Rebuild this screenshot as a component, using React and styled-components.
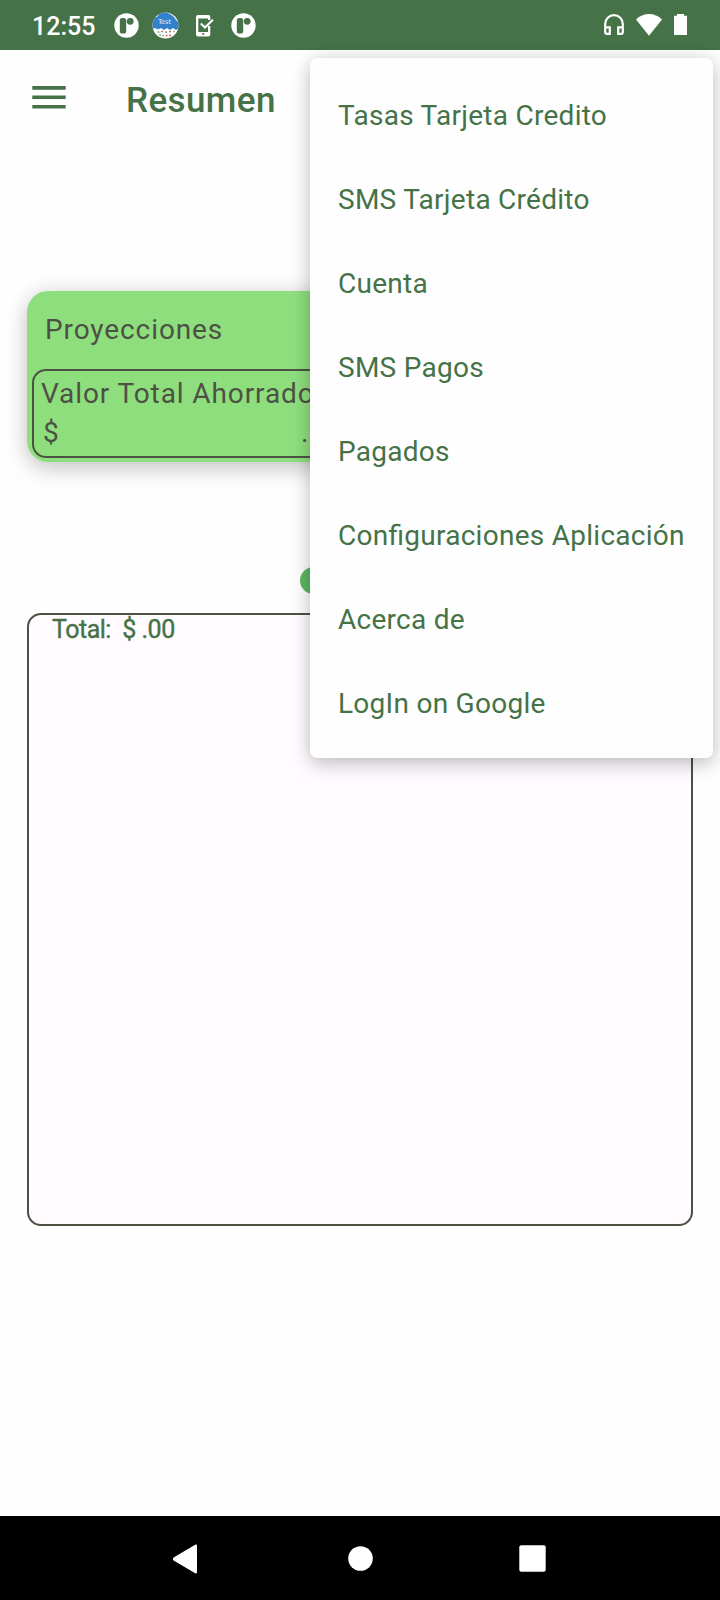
import React from "react";
import styled, { createGlobalStyle } from "styled-components";

const GREEN = "#457247";
const OLIVE = "#4c5144";

const GlobalStyle = createGlobalStyle`
  * { box-sizing: border-box; }
  body { margin: 0; background: #fff; }
`;

const Screen = styled.div`
  position: relative;
  width: 720px;
  height: 1600px;
  display: flex;
  flex-direction: column;
  overflow: hidden;
  background: #fefefe;
  color: ${GREEN};
  font-family: Roboto, "Liberation Sans", sans-serif;
`;

const StatusBar = styled.header`
  height: 50px;
  flex: none;
  display: flex;
  align-items: center;
  justify-content: space-between;
  padding: 1px 33px 0 32px;
  background: ${GREEN};
  color: #fff;
`;

const StatusGroup = styled.div`
  display: flex;
  align-items: center;
  gap: ${(p) => p.$gap}px;
`;

const Clock = styled.span`
  width: 65px;
  font-size: 25px;
  font-weight: 500;
  line-height: 48px;
  padding-top: 2px;
  white-space: nowrap;
`;

const Glyph = styled.svg`
  display: block;
  flex: none;
`;

const AppBar = styled.div`
  height: 98px;
  flex: none;
  display: flex;
  align-items: center;
  gap: 60px;
  padding: 0 0 2px 32px;
`;

const Title = styled.h1`
  margin: 6px 0 0;
  font-size: 35px;
  font-weight: 500;
  line-height: 42px;
  letter-spacing: 0.4px;
`;

const Content = styled.main`
  flex: 1;
  display: flex;
  flex-direction: column;
  padding: 143px 27px 0;
`;

const Card = styled.section`
  height: 171px;
  padding: 20px 5px 4px;
  border-radius: 21px;
  background: #8fde7e;
  color: ${OLIVE};
  box-shadow: 0 8px 22px rgba(0, 0, 0, 0.17), 0 0 22px rgba(0, 0, 0, 0.09);
  display: flex;
  flex-direction: column;
  justify-content: space-between;
`;

const CardTitle = styled.div`
  padding-left: 13px;
  font-size: 28px;
  line-height: 38px;
  letter-spacing: 0.9px;
`;

const SavingsBox = styled.div`
  height: 89px;
  padding: 3px 8px 0 7px;
  border: 2px solid ${OLIVE};
  border-radius: 14px;
  font-size: 28px;
  line-height: 39px;
  letter-spacing: 0.9px;
  white-space: nowrap;
`;

const Amount = styled.div`
  display: flex;
  padding-left: 2px;
`;

const Currency = styled.span`
  width: 258px;
`;

const Pager = styled.div`
  height: 27px;
  margin: 105px 0 19px;
  display: flex;
  justify-content: center;
  gap: 66px;
`;

const PageDot = styled.span`
  width: 27px;
  height: 27px;
  border-radius: 50%;
  background: #5cb860;
`;

const Summary = styled.section`
  height: 613px;
  padding: 0 23px;
  border: 2px solid ${OLIVE};
  border-radius: 14px;
  background: #fffbff;
`;

const Total = styled.p`
  margin: 0;
  font-size: 25px;
  line-height: 30px;
  letter-spacing: -0.5px;
  white-space: pre;
  -webkit-text-stroke: 0.4px ${GREEN};
`;

const Menu = styled.nav`
  position: absolute;
  left: 310px;
  top: 58px;
  width: 403px;
  height: 700px;
  padding: 16px 0 12px;
  border-radius: 7px;
  background: #fefefe;
  box-shadow: 0 7px 20px rgba(0, 0, 0, 0.2), 0 0 16px rgba(0, 0, 0, 0.09);
`;

const MenuItem = styled.div`
  height: 84px;
  padding-left: 28px;
  font-size: 28px;
  line-height: 84px;
  letter-spacing: 0.27px;
  font-feature-settings: "liga" 1;
  white-space: nowrap;
`;

const NavBar = styled.footer`
  height: 84px;
  flex: none;
  display: flex;
  align-items: center;
  justify-content: space-between;
  padding: 1px 172px 0;
  background: #000;
`;

function RoundLogo() {
  return (
    <Glyph width="25" height="25" viewBox="0 0 25 25">
      <circle cx="12.5" cy="12.5" r="12.2" fill="#fff" />
      <rect x="5.8" y="5" width="6.4" height="15.5" rx="2.6" fill={GREEN} />
      <circle cx="16.2" cy="8.3" r="3.4" fill={GREEN} />
    </Glyph>
  );
}

function TestBadge() {
  const marks = [
    [6.5, 20, "#4c9a5c"], [10, 19.5, "#b83a45"], [14, 20, "#4c9a5c"], [18, 19.5, "#c8323c"], [22, 19.5, "#72b37b"],
    [8, 23, "#4c9a5c"], [11, 23.5, "#5da76b"], [14.5, 23.5, "#b83a45"], [18, 23.3, "#c8323c"],
  ];
  return (
    <Glyph width="27" height="27" viewBox="0 0 27 27">
      <defs>
        <clipPath id="badge"><circle cx="13.5" cy="13.5" r="13" /></clipPath>
      </defs>
      <g clipPath="url(#badge)">
        <rect width="27" height="27" fill="#fff" />
        <path d="M0 4L5 5L8 1L13 0L18 2L22 5L24 8L27 11V16L24 18L21 16L18 18L15 16L12 18L9 16L6 17.5L3 16L0 17Z" fill="#3481cb" />
        {marks.map(([x, y, c]) => <rect key={`${x}-${y}`} x={x - 0.7} y={y - 0.7} width="1.5" height="1.5" fill={c} />)}
      </g>
      <text x="12.6" y="12.3" textAnchor="middle" fontSize="6.5" fill="#e6f1fb" fontFamily="DejaVu Sans, sans-serif">Test</text>
    </Glyph>
  );
}

function PhoneCheck() {
  return (
    <Glyph width="18" height="22" viewBox="0 0 18 22">
      <path d="M14.3 5V2Q14.3 0 12.5 0H2Q0 0 0 2V19.5Q0 21.5 2 21.5H12.3Q14.3 21.5 14.3 19.5V11H12V17H2.3V3.5H12V5Z" fill="#fff" />
      <path d="M4.8 8.5L9 12.6L16.9 4.8" fill="none" stroke="#fff" strokeWidth="2.1" />
      <circle cx="7.2" cy="19" r="1.1" fill={GREEN} />
    </Glyph>
  );
}

function Headphones() {
  return (
    <Glyph width="20" height="21" viewBox="0 0 20 21">
      <path
        d="M1.2 13.3V10a8.8 8.8 0 0 1 17.6 0V13.3M1.2 13.3H5.8V19.8H3Q1.2 19.8 1.2 18ZM18.8 13.3H14.2V19.8H17Q18.8 19.8 18.8 18Z"
        fill="none" stroke="#fff" strokeWidth="2.2"
      />
    </Glyph>
  );
}

function Wifi() {
  return (
    <Glyph width="26" height="22" viewBox="0 0 26 22">
      <path d="M0 5.5Q5.5 0 13 0T26 5.5L13 21.7Z" fill="#fff" />
    </Glyph>
  );
}

function Battery() {
  return (
    <Glyph width="13" height="21" viewBox="0 0 13 21">
      <path d="M3 0H10V1.8H13V21H0V1.8H3Z" fill="#fff" />
    </Glyph>
  );
}

const StatusIcons = styled(StatusGroup)`
  padding-bottom: 2px;
`;

const MENU = [
  "Tasas Tarjeta Credito",
  "SMS Tarjeta Crédito",
  "Cuenta",
  "SMS Pagos",
  "Pagados",
  "Configuraciones Aplicación",
  "Acerca de",
  "LogIn on Google",
];

export default function App() {
  return (
    <>
      <GlobalStyle />
      <Screen>
        <StatusBar>
          <StatusGroup $gap={17}>
            <Clock>12:55</Clock>
            <StatusGroup $gap={17}>
              <StatusGroup $gap={13}>
                <RoundLogo />
                <TestBadge />
              </StatusGroup>
              <PhoneCheck />
              <RoundLogo />
            </StatusGroup>
          </StatusGroup>
          <StatusIcons $gap={12}>
            <Headphones />
            <Wifi />
            <Battery />
          </StatusIcons>
        </StatusBar>
        <AppBar>
          <Glyph width="34" height="24" viewBox="0 0 34 24">
            <path d="M.3 1.9H33.7M.3 11.3H33.7M.3 20.7H33.7" stroke={GREEN} strokeWidth="3.6" />
          </Glyph>
          <Title>Resumen</Title>
        </AppBar>
        <Content>
          <Card>
            <CardTitle>Proyecciones</CardTitle>
            <SavingsBox>
              <div>Valor Total Ahorrado</div>
              <Amount>
                <Currency>$</Currency>
                <span>.</span>
              </Amount>
            </SavingsBox>
          </Card>
          <Pager>
            <PageDot />
            <PageDot />
          </Pager>
          <Summary>
            <Total>{"Total:  $ .00"}</Total>
          </Summary>
        </Content>
        <NavBar>
          <Glyph width="29" height="30" viewBox="0 0 29 30">
            <path d="M23.2 .7Q25 0 25 2V28Q25 30 23.2 29.2L1.6 16.5Q0 15 1.6 13.5Z" fill="#fff" />
          </Glyph>
          <Glyph width="25" height="25" viewBox="0 0 25 25">
            <circle cx="12.5" cy="12.5" r="12.3" fill="#fff" />
          </Glyph>
          <Glyph width="29" height="27" viewBox="0 0 29 27">
            <rect x=".3" y=".3" width="26.4" height="26.4" rx="2" fill="#fff" />
          </Glyph>
        </NavBar>
        <Menu>
          {MENU.map((label) => <MenuItem key={label}>{label}</MenuItem>)}
        </Menu>
      </Screen>
    </>
  );
}
